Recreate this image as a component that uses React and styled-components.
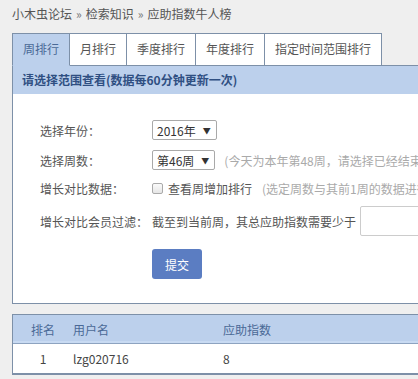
import React from "react";
import styled, { createGlobalStyle } from "styled-components";

const Global = createGlobalStyle`
  html, body { margin: 0; padding: 0; overflow: hidden; }
  body {
    background: #efefef;
    font-family: "Noto Sans CJK SC", "Noto Sans", sans-serif;
    font-size: 12px;
    color: #444;
  }
`;

const Page = styled.div`
  width: 980px;
  padding: 0 0 0 12px;
`;

const Crumbs = styled.div`
  height: 28px;
  line-height: 28px;
  color: #555;
`;

const Sep = styled.span`
  margin: 0 4px;
  color: #777;
`;

const Tabs = styled.div`
  display: flex;
  margin-top: 5px;
`;

const Tab = styled.div`
  height: 31px;
  line-height: 30px;
  padding: 0 ${(p) => p.$pad}px;
  border: 1px solid #7d90a8;
  border-left: ${(p) => (p.$first ? "1px solid #7d90a8" : "none")};
  border-bottom: ${(p) => (p.$active ? "1px solid #bcd0ec" : "1px solid #7d90a8")};
  background: ${(p) => (p.$active ? "#bcd0ec" : "#fff")};
  color: ${(p) => (p.$active ? "#4a6996" : "#555")};
  margin-bottom: -1px;
  position: relative;
  z-index: ${(p) => (p.$active ? 2 : 1)};
`;

const Panel = styled.div`
  border: 1px solid #7d90a8;
  border-right: none;
  background: #fff;
`;

const PanelHead = styled.div`
  height: 28px;
  line-height: 27px;
  background: #bcd0ec;
  padding-left: 9px;
  font-weight: bold;
  color: #2f4f82;
`;

const Form = styled.div`
  padding: 21px 0 24px 27px;
  display: flex;
  flex-direction: column;
`;

const Row = styled.div`
  display: flex;
  align-items: ${(p) => (p.$top ? "flex-start" : "center")};
  height: ${(p) => p.$h}px;
  white-space: nowrap;
`;

const Label = styled.div`
  width: 112px;
  color: #555;
`;

const Select = styled.div`
  height: 20px;
  line-height: 19px;
  box-sizing: border-box;
  border: 1px solid #a9a9a9;
  border-radius: 2px;
  padding: 0 5px 0 4px;
  color: #333;
  display: flex;
  align-items: center;
  gap: 7px;
  background: #fff;
`;

const Arrow = styled.span`
  font-size: 8px;
  color: #333;
`;

const Hint = styled.span`
  color: #aaa;
  margin-left: ${(p) => p.$ml || 0}px;
`;

const Check = styled.span`
  width: 11px;
  height: 11px;
  box-sizing: border-box;
  border: 1px solid #aaa;
  border-radius: 2px;
  background: linear-gradient(#fafafa, #e6e6e6);
  margin-right: 5px;
`;

const Text = styled.span`
  color: #555;
`;

const Input = styled.div`
  width: 80px;
  height: 30px;
  box-sizing: border-box;
  border: 1px solid #ccc;
  border-radius: 2px;
  margin-left: 4px;
  background: #fff;
`;

const Submit = styled.button`
  margin: 8px 0 0 112px;
  width: 50px;
  height: 30px;
  border: none;
  border-radius: 3px;
  background: #5b7dc2;
  color: #fff;
  font-family: inherit;
  font-size: 12px;
  padding: 0;
`;

const Table = styled.div`
  margin-top: 10px;
  border: 1px solid #7d90a8;
  border-right: none;
  background: #fff;
`;

const TRow = styled.div`
  display: grid;
  grid-template-columns: 60px 150px 1fr;
  align-items: center;
  height: ${(p) => (p.$head ? 28 : 29)}px;
  background: ${(p) => (p.$head ? "#bcd0ec" : "#fff")};
  color: ${(p) => (p.$head ? "#4a6996" : "#444")};
  border-bottom: ${(p) => (p.$head ? "1px solid #8da3c0" : "1px solid #7d90a8")};
  box-shadow: ${(p) => (p.$head ? "inset 0 -2px 0 #c8daf2" : "none")};
`;

const Cell = styled.div`
  text-align: ${(p) => (p.$center ? "center" : "left")};
`;

export default function App() {
  const tabs = ["周排行", "月排行", "季度排行", "年度排行", "指定时间范围排行"];
  return (
    <Page>
      <Global />
      <Crumbs>
        小木虫论坛<Sep>»</Sep>检索知识<Sep>»</Sep>应助指数牛人榜
      </Crumbs>
      <Tabs>
        {tabs.map((t, i) => (
          <Tab key={t} $first={i === 0} $active={i === 0} $pad={10}>
            {t}
          </Tab>
        ))}
      </Tabs>
      <Panel>
        <PanelHead>请选择范围查看(数据每60分钟更新一次)</PanelHead>
        <Form>
          <Row $h={30}>
            <Label>选择年份：</Label>
            <Select>
              2016年<Arrow>▼</Arrow>
            </Select>
          </Row>
          <Row $h={30}>
            <Label>选择周数：</Label>
            <Select>
              第46周<Arrow>▼</Arrow>
            </Select>
            <Hint $ml={9}>(今天为本年第48周，请选择已经结束的周数)</Hint>
          </Row>
          <Row $h={26}>
            <Label>增长对比数据：</Label>
            <Check />
            <Text>查看周增加排行</Text>
            <Hint $ml={10}>(选定周数与其前1周的数据进行对比)</Hint>
          </Row>
          <Row $h={40}>
            <Label>增长对比会员过滤：</Label>
            <Text>截至到当前周，其总应助指数需要少于</Text>
            <Input />
          </Row>
          <Row $h={38} $top>
            <Submit>提交</Submit>
          </Row>
        </Form>
      </Panel>
      <Table>
        <TRow $head>
          <Cell $center>排名</Cell>
          <Cell>用户名</Cell>
          <Cell>应助指数</Cell>
        </TRow>
        <TRow>
          <Cell $center>1</Cell>
          <Cell>lzg020716</Cell>
          <Cell>8</Cell>
        </TRow>
      </Table>
    </Page>
  );
}
